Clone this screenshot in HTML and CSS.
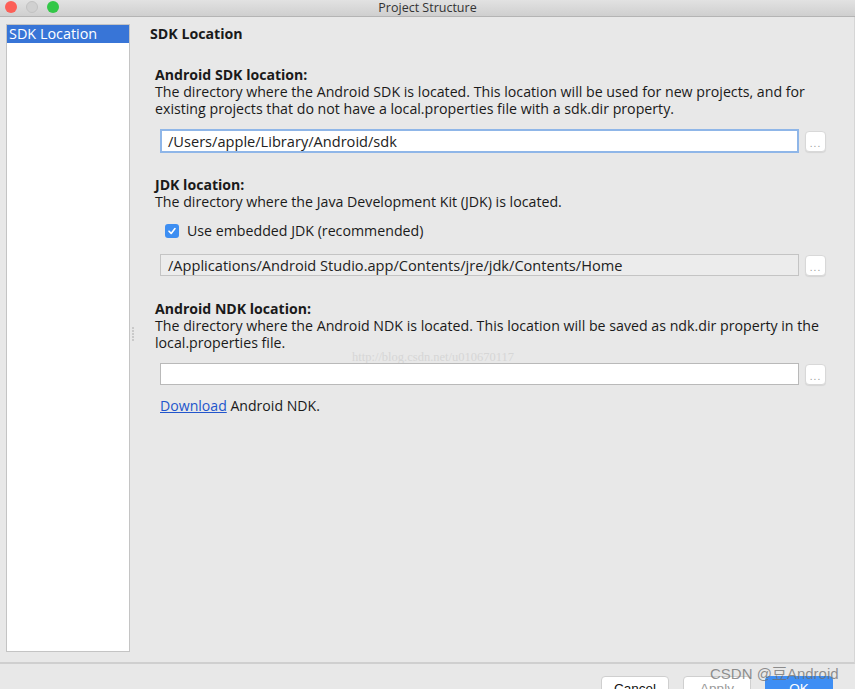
FILE: index.html
```html
<!DOCTYPE html>
<html lang="en">
<head>
    <meta charset="UTF-8">
    <meta name="viewport" content="width=device-width, initial-scale=1.0">
    <title>Project Structure</title>
    <link rel="stylesheet" href="styles.css">
</head>
<body>

<!-- Window title bar -->
<div class="titlebar">
    <div class="lights">
        <span class="light red"></span>
        <span class="light grey"></span>
        <span class="light green"></span>
    </div>
    <div class="title">Project Structure</div>
</div>

<div class="main">
    <!-- Left list -->
    <div class="sidebar">
        <div class="side-item selected">SDK Location</div>
    </div>
    <div class="splitter">
        <span></span><span></span><span></span><span></span><span></span>
    </div>

    <!-- Settings page -->
    <div class="content">
        <h2 class="page-title">SDK Location</h2>

        <div class="section sdk">
            <h3>Android SDK location:</h3>
            <p>The directory where the Android SDK is located. This location will be used for new projects, and for existing projects that do not have a local.properties file with a sdk.dir property.</p>
            <div class="field-row">
                <div class="field focused">/Users/apple/Library/Android/sdk</div>
                <button class="browse">...</button>
            </div>
        </div>

        <div class="section jdk">
            <h3>JDK location:</h3>
            <p>The directory where the Java Development Kit (JDK) is located.</p>
            <label class="check">
                <span class="box">
                    <svg width="10" height="10" viewBox="0 0 10 10"><path d="M2 5.2 L4.2 7.4 L8 2.6" fill="none" stroke="#fff" stroke-width="1.6" stroke-linecap="round" stroke-linejoin="round"/></svg>
                </span>
                Use embedded JDK (recommended)
            </label>
            <div class="field-row">
                <div class="field disabled">/Applications/Android Studio.app/Contents/jre/jdk/Contents/Home</div>
                <button class="browse">...</button>
            </div>
        </div>

        <div class="section ndk">
            <h3>Android NDK location:</h3>
            <p>The directory where the Android NDK is located. This location will be saved as ndk.dir property in the local.properties file.</p>
            <div class="watermark">http://blog.csdn.net/u010670117</div>
            <div class="field-row">
                <div class="field"></div>
                <button class="browse">...</button>
            </div>
            <div class="download"><a href="#">Download</a> Android NDK.</div>
        </div>
    </div>
</div>

<!-- Dialog buttons -->
<div class="footer">
    <button class="dlg-btn">Cancel</button>
    <button class="dlg-btn apply">Apply</button>
    <button class="dlg-btn ok">OK</button>
    <div class="csdn">CSDN @豆Android</div>
</div>

</body>
</html>
```

FILE: styles.css
```css
body {
    margin: 0;
    padding: 0;
    width: 855px;
    height: 689px;
    overflow: hidden;
    background: #e8e8e8;
    font-family: 'Open Sans', 'Noto Sans CJK SC', sans-serif;
    font-size: 14px;
    color: #1a1a1a;
}

.titlebar {
    height: 16px;
    position: relative;
    background: linear-gradient(#e2e2e2, #cfcfcf);
    border-bottom: 1px solid #b4b4b4;
}

.lights {
    display: flex;
    gap: 9px;
    padding: 1px 0 0 5px;
}

.light {
    width: 12px;
    height: 12px;
    border-radius: 50%;
}

.light.red { background: #fc5f57; }
.light.grey { background: #d0d0d0; border: 1px solid #c2c2c2; width: 10px; height: 10px; }
.light.green { background: #33c748; }

.title {
    position: absolute;
    top: 0;
    left: 0;
    right: 0;
    text-align: center;
    line-height: 16px;
    font-size: 12.5px;
    color: #333;
}

.main {
    display: flex;
    height: 647px;
    border-bottom: 2px solid #cfcfcf;
    border-right: 1px solid #d6d6d6;
    box-sizing: border-box;
}

.sidebar {
    margin: 7px 0 10px 6px;
    width: 124px;
    background: #fff;
    border: 1px solid #c4c4c4;
    box-sizing: border-box;
}

.side-item {
    height: 18px;
    line-height: 18px;
    padding-left: 2px;
    font-size: 14.4px;
}

.side-item.selected {
    background: #3875d7;
    color: #fff;
}

.splitter {
    width: 5px;
    display: flex;
    flex-direction: column;
    justify-content: center;
    align-items: center;
    gap: 1px;
    padding-bottom: 12px;
}

.splitter span {
    width: 2px;
    height: 2px;
    background: #c9c9c9;
}

.content {
    flex: 1;
    padding-left: 15px;
}

.page-title {
    margin: 8px 0 0;
    font-size: 14.2px;
    font-weight: bold;
    line-height: 18px;
}

.section {
    padding-left: 5px;
}

.section h3 {
    margin: 0;
    font-size: 14.1px;
    font-weight: bold;
    line-height: 17px;
}

.section p {
    margin: 0;
    width: 680px;
    line-height: 17px;
    font-size: 14.2px;
}

.sdk { margin-top: 23px; }
.jdk { margin-top: 23px; }
.ndk { margin-top: 24px; }

.field-row {
    display: flex;
    align-items: center;
    gap: 6px;
    margin-left: 5px;
}

.sdk .field-row { margin-top: 12px; }
.jdk .field-row { margin-top: 14px; }

.field {
    width: 639px;
    height: 22px;
    box-sizing: border-box;
    background: #fff;
    border: 1px solid #b9b9b9;
    line-height: 20px;
    padding-left: 7px;
    font-size: 14.6px;
    color: #222;
}

.field.focused {
    border: 2px solid #8fb6e8;
    height: 24px;
    line-height: 20px;
    padding-left: 6px;
}

.field.disabled {
    background: #ececec;
    border-color: #c4c4c4;
}

.browse {
    width: 21px;
    height: 21px;
    padding: 6px 0 0;
    border: 1px solid #d8d8d8;
    border-radius: 4px;
    background: #fff;
    box-shadow: 0 1px 1px rgba(0, 0, 0, 0.08);
    color: #999;
    font-size: 10px;
    line-height: 1;
    letter-spacing: 1px;
    font-family: 'Liberation Sans', sans-serif;
}

.check {
    display: flex;
    align-items: center;
    gap: 8px;
    margin: 12px 0 0 10px;
    font-size: 14.2px;
    line-height: 18px;
}

.box {
    width: 14px;
    height: 14px;
    border-radius: 3px;
    background: #3d8ef2;
    display: flex;
    align-items: center;
    justify-content: center;
}

.watermark {
    margin: 1px 0 0 197px;
    height: 11px;
    line-height: 11px;
    font-family: 'Liberation Serif', serif;
    font-size: 12.5px;
    color: #d6d6d6;
}

.download {
    margin: 12px 0 0 5px;
    font-size: 14.1px;
    line-height: 18px;
}

.download a {
    color: #2255cc;
}

.footer {
    position: relative;
    display: flex;
    gap: 14px;
    padding: 12px 0 0 601px;
}

.dlg-btn {
    width: 68px;
    height: 22px;
    border: 1px solid #cfcfcf;
    border-radius: 4px;
    background: #fff;
    font-family: 'Liberation Sans', sans-serif;
    font-size: 13.5px;
    color: #111;
    padding: 3px 0 0;
}

.dlg-btn.apply {
    color: #9a9a9a;
}

.dlg-btn.ok {
    background: #3e8ef4;
    border-color: #3e8ef4;
    color: #fff;
}

.csdn {
    position: absolute;
    left: 710px;
    top: -2px;
    font-family: 'Liberation Sans', 'Noto Sans CJK SC', sans-serif;
    font-size: 15px;
    color: rgba(110, 110, 110, 0.75);
}
```
